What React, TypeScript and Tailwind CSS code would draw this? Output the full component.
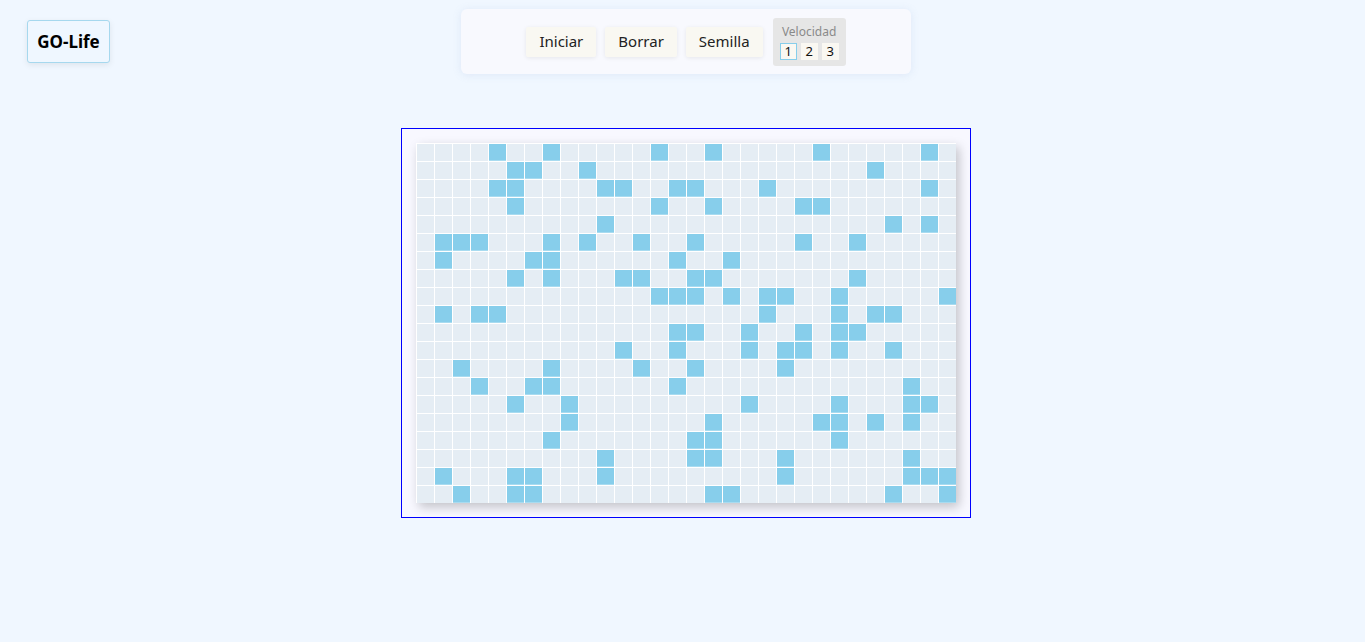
import React from "react"

const ROWS = 20
const COLS = 30

// live cells per row, read off the reference
const LIVE: number[][] = [
  [4, 7, 13, 16, 22, 28],
  [5, 6, 9, 25],
  [4, 5, 10, 11, 14, 15, 19, 28],
  [5, 13, 16, 21, 22],
  [10, 26, 28],
  [1, 2, 3, 7, 9, 12, 15, 21, 24],
  [1, 6, 7, 14, 17],
  [5, 7, 11, 12, 15, 16, 24],
  [13, 14, 15, 17, 19, 20, 23, 29],
  [1, 3, 4, 19, 23, 25, 26],
  [14, 15, 18, 21, 23, 24],
  [11, 14, 18, 20, 21, 23, 26],
  [2, 7, 12, 15, 20],
  [3, 6, 7, 14, 27],
  [5, 8, 18, 23, 27, 28],
  [8, 16, 22, 23, 25, 27],
  [7, 15, 16, 23],
  [10, 15, 16, 20, 27],
  [1, 5, 6, 10, 20, 27, 28, 29],
  [2, 5, 6, 16, 17, 26, 29],
]

const Board: React.FC = () => {
  const cells: React.ReactNode[] = []
  for (let r = 0; r < ROWS; r++) {
    for (let c = 0; c < COLS; c++) {
      const alive = LIVE[r].includes(c)
      cells.push(
        <div
          key={`${r}-${c}`}
          className={alive ? "bg-[#87ceeb] shadow-[inset_0_-1px_0_#a8dbf0]" : "bg-[#e5edf4]"}
        />
      )
    }
  }
  return (
    <div className="grid grid-cols-[repeat(30,17px)] grid-rows-[repeat(20,17px)] gap-px bg-white pl-px pt-px shadow-[3px_4px_10px_rgba(0,0,0,0.22)]">
      {cells}
    </div>
  )
}

const Button: React.FC<{ label: string }> = ({ label }) => (
  <button className="h-[30px] px-[13px] rounded-[2px] bg-[#f9f8f2] text-[15px] text-[#222] shadow-[0_1px_4px_rgba(0,0,0,0.08)]">
    {label}
  </button>
)

export default function App() {
  const speed = 1
  return (
    <div className="min-h-screen bg-[#f0f7ff] font-['Noto_Sans',sans-serif] pl-[7px] pt-[9px]">
      <div className="grid grid-cols-[1fr_auto_1fr]">
        <div className="pl-[20px] pt-[11px]">
          <div className="inline-flex h-[43px] w-[83px] items-center justify-center rounded-[3px] border border-[#a6d8ee] bg-[#eff7ff] text-[17px] font-bold text-black shadow-[0_2px_6px_rgba(0,0,0,0.08)]">
            GO-Life
          </div>
        </div>
        <div className="flex h-[65px] w-[450px] items-center justify-center gap-[9px] rounded-[6px] bg-[#f8f9fe] shadow-[0_1px_8px_rgba(120,150,200,0.15)]">
          <Button label="Iniciar" />
          <Button label="Borrar" />
          <Button label="Semilla" />
          <div className="ml-px flex h-[48px] w-[73px] flex-col items-center rounded-[3px] bg-[#e6e6e6] pt-[6px]">
            <span className="text-[12px] leading-[16px] text-[#8a8a8a]">Velocidad</span>
            <div className="mt-[3px] flex gap-[4px]">
              {[1, 2, 3].map((n) => (
                <button
                  key={n}
                  className={`flex h-[17px] w-[17px] items-center justify-center bg-[#faf8f2] text-[13px] leading-none text-[#111] ${
                    n === speed ? "border border-[#87ceeb]" : ""
                  }`}
                >
                  {n}
                </button>
              ))}
            </div>
          </div>
        </div>
        <div />
      </div>
      <div className="mt-[54px] flex justify-center">
        <div className="flex h-[390px] w-[570px] items-center justify-center border border-[#0000ff] bg-[#f8f8ff]">
          <Board />
        </div>
      </div>
    </div>
  )
}
